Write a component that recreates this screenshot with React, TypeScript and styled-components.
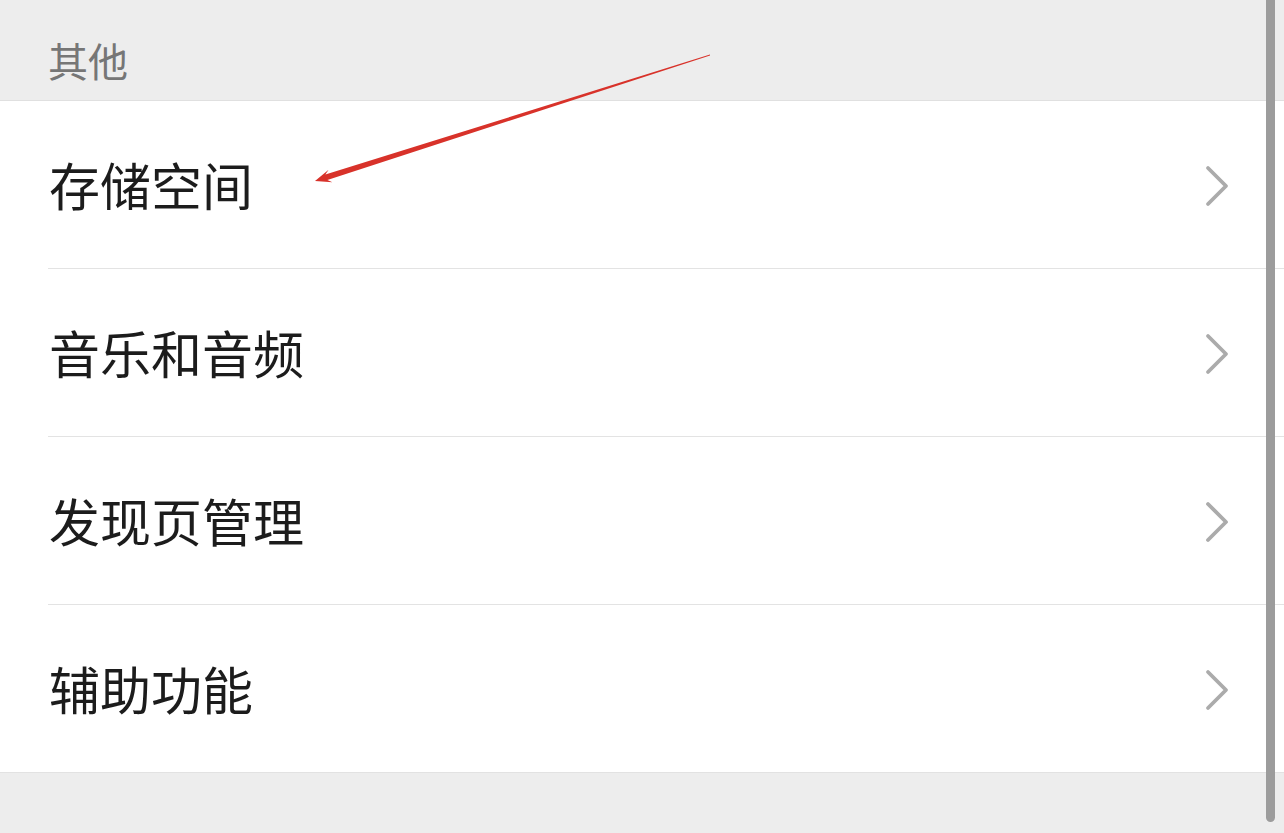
import styled, { createGlobalStyle } from "styled-components";

const GlobalStyle = createGlobalStyle`
	html, body {
		margin: 0;
		padding: 0;
		background: #ededed;
	}
	body {
		font-family: "Noto Sans CJK SC", "Noto Sans", sans-serif;
	}
`;

const items = ["存储空间", "音乐和音频", "发现页管理", "辅助功能"];

const Chevron = () => (
	<svg width="28" height="42" viewBox="0 0 28 42">
		<polyline
			points="4,3 22,21 4,39"
			fill="none"
			stroke="#ababab"
			strokeWidth="3.8"
			strokeLinecap="round"
			strokeLinejoin="round"
		/>
	</svg>
);

const Arrow = () => (
	<ArrowLayer width="1284" height="833" viewBox="0 0 1284 833">
		<polygon
			points="315,181 328.6,169.8 325.4,174.6 710,54.5 710,55.5 327.4,180 332.4,182.2"
			fill="#d8322a"
		/>
	</ArrowLayer>
);

const App = () => {
	return (
		<Page>
			<GlobalStyle />
			<SectionHeader>其他</SectionHeader>
			<List>
				{items.map((label, i) => (
					<Row key={label} last={i === items.length - 1}>
						<Label>{label}</Label>
						<ChevronBox>
							<Chevron />
						</ChevronBox>
					</Row>
				))}
			</List>
			<Footer />
			<Arrow />
			<ScrollBar />
		</Page>
	);
};

const Page = styled.div`
	position: relative;
	width: 1284px;
	height: 833px;
	overflow: hidden;
	background: #ededed;
`;

const SectionHeader = styled.div`
	height: 80px;
	padding: 20px 0 0 48px;
	display: flex;
	align-items: center;
	font-size: 40px;
	color: #767676;
	line-height: 1;
	border-bottom: 1px solid #e0e0e0;
`;

const List = styled.div`
	background: #ffffff;
	border-bottom: 1px solid #e2e2e2;
`;

const Row = styled.div<{ last?: boolean }>`
	height: 167px;
	margin-left: 48px;
	display: flex;
	align-items: center;
	justify-content: space-between;
	border-bottom: ${(p) => (p.last ? "none" : "1px solid #e3e3e3")};
`;

const Label = styled.span`
	font-size: 51px;
	color: #1c1c1c;
	line-height: 1;
	padding-left: 1px;
`;

const ChevronBox = styled.div`
	display: flex;
	align-items: center;
	margin-right: 52px;
	padding-top: 2px;
`;

const Footer = styled.div`
	height: 60px;
	background: #ededed;
`;

const ArrowLayer = styled.svg`
	position: absolute;
	top: 0;
	left: 0;
	pointer-events: none;
`;

const ScrollBar = styled.div`
	position: absolute;
	top: 0;
	left: 1266px;
	width: 9px;
	height: 822px;
	background: #9c9c9c;
	border-radius: 0 0 5px 5px;
`;

export default App;
